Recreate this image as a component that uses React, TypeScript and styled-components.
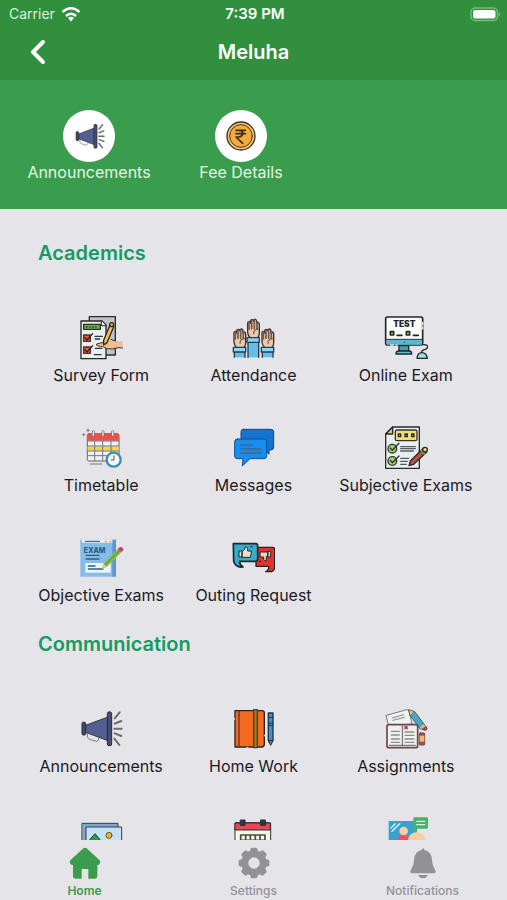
import React from "react";
import styled, { createGlobalStyle } from "styled-components";

const GlobalStyle = createGlobalStyle`
  *, *::before, *::after { box-sizing: border-box; }
  body {
    margin: 0;
    background: #e5e4e9;
    font-family: Inter, "Liberation Sans", sans-serif;
  }
  button { font: inherit; color: inherit; background: none; border: 0; padding: 0; cursor: pointer; }
`;

const Screen = styled.div`
  display: flex;
  flex-direction: column;
  height: 100vh;
  overflow: hidden;
  background: #e5e4e9;
`;

const TopBar = styled.header`
  background: #31903d;
  color: #fff;
`;

const StatusBar = styled.div`
  display: grid;
  grid-template-columns: 1fr auto 1fr;
  align-items: center;
  height: 28px;
  padding: 0 6px 0 9px;
  font-size: 14px;
  line-height: 20px;
`;

const Carrier = styled.span`
  display: flex;
  align-items: center;
  gap: 6px;
  color: #d9f2dc;
`;

const Clock = styled.span`
  font-size: 15px;
  font-weight: 600;
`;

const BatterySlot = styled.span`
  display: flex;
  justify-content: flex-end;
`;

const NavBar = styled.div`
  display: grid;
  grid-template-columns: 56px 1fr 56px;
  align-items: center;
  height: 52px;
  padding: 0 10px 4px;
`;

const BackButton = styled.button`
  display: flex;
  justify-content: center;
`;

const Title = styled.h1`
  margin: 0;
  text-align: center;
  font-size: 20px;
  line-height: 28px;
  font-weight: 600;
`;

const Hero = styled.section`
  display: grid;
  grid-template-columns: repeat(3, 1fr);
  padding: 30px 38px 27px 13px;
  background: #3a9c4d;
`;

const Shortcut = styled.button`
  display: flex;
  flex-direction: column;
  align-items: center;
  color: #e2f7e4;
  font-size: 16px;
  line-height: 20px;
  white-space: nowrap;
`;

const Disc = styled.span`
  display: flex;
  align-items: center;
  justify-content: center;
  width: 52px;
  height: 52px;
  border-radius: 50%;
  background: #fff;
`;

const Content = styled.main`
  flex: 1;
  min-height: 0;
  overflow-y: auto;
  scrollbar-width: none;
  padding: 14px 25px 0;
`;

const SectionTitle = styled.h2`
  margin: 0;
  padding-left: 13px;
  font-size: 20px;
  line-height: 61px;
  font-weight: 600;
  color: #149b61;
`;

const Grid = styled.div`
  display: grid;
  grid-template-columns: repeat(3, minmax(0, 1fr));
`;

const Tile = styled.button`
  display: flex;
  flex-direction: column;
  align-items: center;
  gap: 4px;
  height: 110px;
  padding-top: 32px;
  font-size: 16px;
  line-height: 22px;
  color: #1b1b1f;
  white-space: nowrap;
`;

const TabBar = styled.nav`
  display: grid;
  grid-template-columns: repeat(3, 1fr);
  height: 60px;
  background: #e5e4e9;
`;

const Tab = styled.a<{ $active?: boolean }>`
  display: flex;
  flex-direction: column;
  align-items: center;
  gap: 4px;
  padding-top: 7px;
  font-size: 12px;
  line-height: 16px;
  font-weight: ${(p) => (p.$active ? 600 : 500)};
  color: ${(p) => (p.$active ? "#3a9c4d" : "#929197")};
  text-decoration: none;
`;

type ArtProps = { box: string; size?: number; children: React.ReactNode };

const Art = ({ box, size = 44, children }: ArtProps) => (
  <svg width={size} height={size} viewBox={box} fill="none" strokeLinejoin="round" strokeLinecap="round" aria-hidden="true">
    {children}
  </svg>
);

const Megaphone = ({ size }: { size?: number }) => (
  <Art box="57 36 132 132" size={size}>
    <path d="M82 116v9q2 7 10 9l18 5q5 0 7-9" stroke="#77777d" strokeWidth="3" />
    <path d="M77 91 144 66V137L77 112Z" fill="#535f8f" stroke="#30334a" strokeWidth="3" />
    <rect x="66" y="82" width="11" height="38" rx="4" fill="#414868" stroke="#292a36" strokeWidth="3" />
    <rect x="142" y="51" width="13" height="101" rx="5" fill="#454d75" stroke="#292a36" strokeWidth="3" />
    <path d="m164 70 15-18M164 86l20-8M163 101h22M164 115l20 8M163 131l15 19" stroke="#6a6a70" strokeWidth="6" />
  </Art>
);

const Coin = () => (
  <Art box="532 64 90 90" size={30}>
    <circle cx="577" cy="109" r="42" fill="#f5c274" stroke="#3d332b" strokeWidth="4" />
    <circle cx="577" cy="109" r="34" fill="#f5ab3c" stroke="#4a3827" strokeWidth="3" />
    <path d="M562 92h28M562 102h28M562 92h9q11 0 11 9t-11 11h-9l20 19" stroke="#3a2c20" strokeWidth="5" />
  </Art>
);

const Survey = () => (
  <Art box="57 33 132 132">
    <path d="M88 35H166V150H88Z" fill="#bfc5c5" stroke="#292c2e" strokeWidth="4" />
    <path d="M63 48H126l12 12V161H63Z" fill="#e9efee" stroke="#242729" strokeWidth="4" />
    <path d="M124 48v14h14" fill="#fff" stroke="#242729" strokeWidth="3" />
    <rect x="71" y="58" width="50" height="15" fill="#79ad4b" stroke="#25351f" strokeWidth="4" />
    <path d="M79 66h34" stroke="#334b25" strokeWidth="4" strokeDasharray="3 6" />
    <path d="M71 90H91V109H71ZM71 126H91V145H71Z" fill="#e55d43" stroke="#5b2924" strokeWidth="4" />
    <path d="m75 98 6 7 17-19M75 134l6 7 17-19" stroke="#242628" strokeWidth="4" />
    <path d="M105 94h22M106 102h13M106 130h20M103 149h20" stroke="#293447" strokeWidth="4" />
    <path d="M188 109 166 108 146 98q-5 0-6 6l-12 7-18 5q-3 5 4 6l14 2 12 6 18 1 16-4h14Z" fill="#edbd93" />
    <path d="m188 129-14-1-16 4-18-1-12-6-14-2q-7-2-4-6l20-5M166 108l-13-5" stroke="#40342d" strokeWidth="3" />
    <path d="m149 62 12 3-20 48-10 7 0-14Z" fill="#f2c44d" stroke="#292825" strokeWidth="4" />
    <circle cx="155" cy="59" r="6" fill="#e4ae42" stroke="#292825" strokeWidth="4" />
  </Art>
);

const Hand = ({ x, y, foot }: { x: number; y: number; foot: number }) => (
  <g transform={`translate(${x} ${y})`}>
    <path d={`M4 58H36V${foot}H4Z`} fill="#66bdea" />
    <path d={`M4 ${foot}V58M36 58V${foot}`} stroke="#293e4a" strokeWidth="4" />
    <path d="M3 12q0-5 4-5t4 5V6q0-5 5-5t5 5V4q1-5 5-4t4 6v7q0-5 4-4t4 6v26q0 12-9 16H12Q3 49 3 39Z" fill="#edc8ad" stroke="#392f2b" strokeWidth="4" />
    <path d="M7 8v22M15 3v25M23 3v25M31 8v20" stroke="#735a4c" strokeWidth="5" />
    <path d="M34 29q-14 1-13 14" stroke="#493a33" strokeWidth="3" />
    <rect x="1" y="55" width="37" height="14" fill="#8bd4f3" stroke="#293e4a" strokeWidth="4" />
  </g>
);

const Hands = () => (
  <Art box="64 33 132 132">
    <Hand x={70} y={72} foot={85} />
    <Hand x={154} y={72} foot={85} />
    <Hand x={111} y={43} foot={114} />
  </Art>
);

const OnlineExam = () => (
  <Art box="72 33 132 132">
    <path d="M189 119q14-1 14 7 0 6-10 8-8 2-8 9" stroke="#202629" strokeWidth="4" />
    <path d="M117 122h29v17H117Z" fill="#4c9dad" stroke="#17272b" strokeWidth="4" />
    <path d="M108 147q0-9 8-9h32q7 0 7 9Z" fill="#68c0d5" stroke="#17272b" strokeWidth="4" />
    <rect x="77" y="36" width="111" height="84" rx="6" fill="#fbfcf8" stroke="#20282a" strokeWidth="5" />
    <path d="M80 104H186V119H80Z" fill="#53bbd6" />
    <path d="M78 103H187" stroke="#243236" strokeWidth="3" />
    <circle cx="133" cy="112" r="2" fill="#17272b" />
    <path d="M91 80h10v10H91ZM139 80h10v10h-10Z" fill="#b1cb74" stroke="#242a24" strokeWidth="5" />
    <path d="M111 91h15M160 91h15" stroke="#202629" strokeWidth="5" />
    <path d="M188 52v8M188 66v6M92 120h8M108 120h3" stroke="#e5e4e9" strokeWidth="4" />
    <path d="M171 160q2-17 15-17t16 17Z" fill="#a4dce9" stroke="#17272b" strokeWidth="4" />
    <text x="133" y="67" textAnchor="middle" fontFamily="Inter, sans-serif" fontSize="25" fontWeight="900" fill="#202629">TEST</text>
  </Art>
);

const Timetable = () => (
  <Art box="57 33 132 132">
    <rect x="82" y="56" width="95" height="82" rx="5" fill="#eef1f3" stroke="#66636b" strokeWidth="3" />
    <path d="M82 77V61q0-6 6-6h83q6 0 6 6v16Z" fill="#ee4f48" />
    <path d="M83 94h93v13H83Z" fill="#f1d544" />
    <path d="M83 78h93M83 93h93M83 108h93M83 122h93M104 78v59M128 78v59M153 78v59" stroke="#77767c" strokeWidth="3" />
    <path d="M100 50v11M129 50v11M158 50v11" stroke="#807680" strokeWidth="9" />
    <path d="M100 50v11M129 50v11M158 50v11" stroke="#e9e6ec" strokeWidth="4" />
    <path d="M84 42v8M80 46h8M71 56v6M68 59h6" stroke="#6c7c81" strokeWidth="3" />
    <path d="M91 147h34" stroke="#77767c" strokeWidth="3" />
    <circle cx="161" cy="134" r="21" fill="#f7f8fa" stroke="#3c8fae" strokeWidth="7" />
    <path d="M162 122v13h-8" stroke="#4e5966" strokeWidth="3" />
  </Art>
);

const Messages = () => (
  <Art box="64 33 132 132">
    <path d="M101 43h83q8 0 8 8v45q0 9-8 9h-6v13l-10-11h-67q-7 0-7-8V50q0-7 7-7Z" fill="#1473d3" stroke="#174a7c" strokeWidth="3" />
    <path d="M83 72h80q8 0 8 8v42q0 9-8 9h-42l-23 22 2-22H83q-8 0-8-8V80q0-8 8-8Z" fill="#168df0" stroke="#174f88" strokeWidth="3" />
    <path d="M95 91h32M95 103h58M95 114h58" stroke="#39678e" strokeWidth="6" />
    <path d="M96 91h30M96 103h56M96 114h56" stroke="#6d777e" strokeWidth="2" />
  </Art>
);

const SubjectiveExam = () => (
  <Art box="72 33 132 132">
    <path d="M98 36H178V160H77V57Z" fill="#e9eeee" stroke="#272b2e" strokeWidth="4" />
    <path d="M98 36V57H77Z" fill="#e5c356" stroke="#272b2e" strokeWidth="4" />
    <rect x="106" y="45" width="65" height="32" rx="5" fill="#f1dc80" stroke="#363329" strokeWidth="4" />
    <path d="M115 57h7v8h-7ZM135 57h7v8h-7ZM155 57h7v8h-7Z" fill="#a7bd5d" stroke="#262922" strokeWidth="4" />
    <circle cx="97" cy="101" r="13" fill="#a5cf67" stroke="#2c3b28" strokeWidth="4" />
    <circle cx="97" cy="138" r="13" fill="#a5cf67" stroke="#2c3b28" strokeWidth="4" />
    <path d="m91 99 6 7 20-21M91 136l6 7 20-20" stroke="#26302a" strokeWidth="4" />
    <path d="M122 95h44M122 101h44M122 108h38M122 130h24M122 139h20M122 148h17" stroke="#535a60" strokeWidth="4" />
    <path d="m190 100 10 11-39 37-14 4 4-14Z" fill="#b85443" stroke="#292929" strokeWidth="4" />
    <path d="m184 106 9 10" stroke="#78a863" strokeWidth="5" />
    <circle cx="195" cy="104" r="7" fill="#ecd480" stroke="#292929" strokeWidth="4" />
  </Art>
);

const ObjectiveExam = () => (
  <Art box="57 18 132 132">
    <path d="M61 29H168V140H61Z" fill="#85bdea" />
    <path d="M157 29h11v111h-11Z" fill="#5b96d0" />
    <path d="M66 29h91v9H66Z" fill="#eff3f4" />
    <path d="M76 34h43" stroke="#344759" strokeWidth="3" />
    <path d="M136 34h3M150 34h3" stroke="#ec8f61" strokeWidth="4" />
    <path d="M76 99h76v29H76Z" fill="#edf5fa" />
    <path d="M78 76h39M78 87h39M85 108h20M85 117h44" stroke="#2f5d82" strokeWidth="4" />
    <text x="104" y="68" textAnchor="middle" fontFamily="Inter, sans-serif" fontSize="21" fontWeight="800" fill="#315b7c">EXAM</text>
    <path d="m173 57 11 10-43 43-15 6 4-15Z" fill="#8abc49" />
    <path d="m178 62-44 44" stroke="#679d3c" strokeWidth="4" />
    <path d="m130 101 11 10-15 5Z" fill="#edc579" />
    <path d="m173 57 11 10 5-6q2-3-1-7-5-5-9-2Z" fill="#ca3e77" />
  </Art>
);

const Outing = () => (
  <Art box="514 18 132 132">
    <path d="M589 52h49q7 0 7 7v54q-1 9-9 12h-18q10-3 9-16h-38Z" fill="#df332d" stroke="#242326" strokeWidth="4" />
    <path d="M521 41h67q6 0 6 6v41q0 6-6 6h-48q-1 10 10 17-22 3-28-17Z" fill="#35aeca" stroke="#202528" strokeWidth="5" />
    <path d="M539 63h8v18h-8ZM548 64l8-7V51q6-2 8 3v9h11v6l-3 13h-24Z" fill="#e7e5cf" stroke="#25292b" strokeWidth="3" />
    <path d="M602 66h23v14h-5v12q-6 2-8-4v-7h-10ZM625 64h8v17h-8Z" fill="#e5d6c3" stroke="#392123" strokeWidth="3" />
    <path d="M600 94h3M574 50h3" stroke="#25292b" strokeWidth="4" />
  </Art>
);

const HomeWork = () => (
  <Art box="514 36 132 132">
    <path d="M526 47h82q6 0 6 7v93q0 9-8 9h-80Z" fill="#f56a21" stroke="#282323" strokeWidth="4" />
    <path d="M538 48v107" stroke="#6a3324" strokeWidth="4" />
    <path d="M582 44h11v114h-11Z" fill="#98812e" stroke="#454025" strokeWidth="4" />
    <path d="M626 54h14v82l-7 14-7-14Z" fill="#3495dd" stroke="#21323d" strokeWidth="4" />
    <path d="M626 67h14M626 84h14M626 91h14M626 136h14" stroke="#21323d" strokeWidth="3" />
    <path d="m629 142 4 8 4-8Z" fill="#ad5140" />
    <path d="M525 70v3M615 120v3M562 157h3" stroke="#e5e4e9" strokeWidth="3" />
  </Art>
);

const Assignments = () => (
  <Art box="162 36 132 132">
    <path d="m169 61 61-17q6-1 8 6l8 37-69 5Z" fill="#f0f1f1" stroke="#7b7b7e" strokeWidth="3" />
    <path d="m187 69 34-10M189 76l34-9" stroke="#838386" strokeWidth="3" />
    <path d="m237 45 17 5 31 41-13 12-31-40Z" fill="#4ba6c6" stroke="#44606c" strokeWidth="3" />
    <path d="m237 45 16 4-12 13Z" fill="#e9c48a" stroke="#44606c" strokeWidth="2" />
    <path d="m276 102 11-9q7 8 2 12-6 3-13-3Z" fill="#bf4050" stroke="#7c3640" strokeWidth="3" />
    <path d="m270 98 11-10 5 6-11 9Z" fill="#e4bf71" />
    <rect x="171" y="89" width="92" height="69" rx="5" fill="#f0f0ee" stroke="#64484e" strokeWidth="5" />
    <path d="M217 91v61M178 151h78" stroke="#675e62" strokeWidth="3" />
    <path d="M184 109h24M184 120h24M184 132h24M184 142h24M225 111h27M225 121h27M225 132h27M225 142h27" stroke="#8b8d90" strokeWidth="4" />
    <path d="M223 93h10v12l-5-4-5 4Z" fill="#b73e50" />
    <rect x="268" y="114" width="16" height="36" rx="3" fill="#ad4c4b" stroke="#71474a" strokeWidth="3" />
    <path d="M269 122h14v18h-14Z" fill="#edbf66" />
  </Art>
);

const Gallery = () => (
  <Art box="237 51 132 132">
    <path d="M247 70H354V155H247Z" fill="#83a7c6" stroke="#31424f" strokeWidth="3" />
    <path d="M259 81H365V167H259Z" fill="#c4e1f7" stroke="#31424f" strokeWidth="3" />
    <path d="m265 124 20-23 31 37h-51Z" fill="#2b9b4b" stroke="#24432e" strokeWidth="3" />
    <circle cx="327" cy="106" r="9" fill="#edb331" stroke="#695b32" strokeWidth="3" />
  </Art>
);

const EventCalendar = () => (
  <Art box="694 51 132 132">
    <rect x="706" y="68" width="107" height="98" rx="3" fill="#f8f7e7" stroke="#2c3036" strokeWidth="3" />
    <path d="M707 69H812V90H707Z" fill="#e54756" stroke="#352d34" strokeWidth="3" />
    <path d="M723 60h13v16h-13ZM784 60h13v16h-13Z" fill="#2c3b47" stroke="#202a33" strokeWidth="3" />
    <path d="M723 105h73v43h-73ZM723 121h73M738 105v43M752 105v43M767 105v43M781 105v43" stroke="#4b4b43" strokeWidth="5" />
  </Art>
);

const Meeting = () => (
  <Art box="1152 51 132 132">
    <path d="M1166 63H1251V145H1166Z" fill="#3aa2ca" />
    <path d="m1173 84 13-13M1176 94l23-23" stroke="#d9effa" strokeWidth="4" />
    <path d="M1192 135v-17q2-14 18-14t18 14v17Z" fill="#ef5060" />
    <circle cx="1211" cy="93" r="13" fill="#f5cfa3" />
    <circle cx="1250" cy="122" r="26" fill="#f5cfa3" />
    <path d="M1243 52h37q4 0 4 4v26q0 4-4 4h-27l-13 8V56q0-4 3-4Z" fill="#42b568" />
    <path d="M1250 64h24M1250 74h24" stroke="#e2f5e8" strokeWidth="4" />
  </Art>
);

const HomeIcon = () => (
  <Art box="207 141 96 96" size={32}>
    <path d="M250 145q5-3 10 0l39 36q3 4 1 9l-4 5h-4v34q0 7-7 7h-20v-29h-20v29h-19q-7 0-7-7v-34h-4l-5-5q-2-5 1-9Z" fill="currentColor" />
  </Art>
);

const GearIcon = () => (
  <Art box="0 0 96 96" size={32}>
    <g fill="currentColor">
      <path fillRule="evenodd" d="M48 10a38 38 0 1 0 0 76 38 38 0 0 0 0-76Zm0 21a17 17 0 1 1 0 34 17 17 0 0 1 0-34Z" />
      {[0, 45, 90, 135, 180, 225, 270, 315].map((angle) => (
        <path key={angle} d="M35 17 38 5q1-3 4-3h12q3 0 4 3l3 12Z" transform={`rotate(${angle} 48 48)`} />
      ))}
    </g>
  </Art>
);

const BellIcon = () => (
  <Art box="1218 141 96 96" size={32}>
    <path d="M1266 145q4 0 4 5 22 5 23 29 0 17 9 30 3 5 2 8-1 3-6 3h-64q-5 0-6-3-1-3 2-8 9-13 9-30 1-24 23-29 0-5 4-5ZM1252 225h28q-3 10-14 10t-14-10Z" fill="currentColor" />
  </Art>
);

const WifiIcon = () => (
  <svg width="20" height="16" viewBox="0 0 40 32" fill="none" stroke="#fff" strokeWidth="5" aria-hidden="true">
    <path d="M3 12Q20-3 37 12M10 20q10-9 20 0" />
    <path d="m14 24 6 7 6-7q-6-5-12 0Z" fill="#fff" stroke="none" />
  </svg>
);

const BatteryIcon = () => (
  <svg width="31" height="15" viewBox="0 0 62 30" fill="none" role="img" aria-label="Battery full">
    <rect x="2" y="2" width="53" height="25" rx="8" stroke="#77b980" strokeWidth="3" />
    <rect x="6" y="6" width="45" height="17" rx="4" fill="#fff" />
    <path d="M58 10q4 4 0 9Z" fill="#8bc493" />
  </svg>
);

const BackIcon = () => (
  <svg width="18" height="26" viewBox="0 0 18 26" fill="none" aria-hidden="true">
    <path d="M14 3 4 13l10 10" stroke="#fff" strokeWidth="4" strokeLinecap="round" strokeLinejoin="round" />
  </svg>
);

const sections = [
  {
    title: "Academics",
    items: [
      { label: "Survey Form", icon: <Survey /> },
      { label: "Attendance", icon: <Hands /> },
      { label: "Online Exam", icon: <OnlineExam /> },
      { label: "Timetable", icon: <Timetable /> },
      { label: "Messages", icon: <Messages /> },
      { label: "Subjective Exams", icon: <SubjectiveExam /> },
      { label: "Objective Exams", icon: <ObjectiveExam /> },
      { label: "Outing Request", icon: <Outing /> },
    ],
  },
  {
    title: "Communication",
    items: [
      { label: "Announcements", icon: <Megaphone /> },
      { label: "Home Work", icon: <HomeWork /> },
      { label: "Assignments", icon: <Assignments /> },
      { name: "Gallery", icon: <Gallery /> },
      { name: "Calendar", icon: <EventCalendar /> },
      { name: "Meetings", icon: <Meeting /> },
    ],
  },
] as { title: string; items: { label?: string; name?: string; icon: React.ReactNode }[] }[];

export default function App() {
  return (
    <Screen>
      <GlobalStyle />
      <TopBar>
        <StatusBar>
          <Carrier>Carrier <WifiIcon /></Carrier>
          <Clock>7:39 PM</Clock>
          <BatterySlot><BatteryIcon /></BatterySlot>
        </StatusBar>
        <NavBar>
          <BackButton type="button" aria-label="Back"><BackIcon /></BackButton>
          <Title>Meluha</Title>
        </NavBar>
      </TopBar>
      <Hero>
        <Shortcut type="button"><Disc><Megaphone size={31} /></Disc>Announcements</Shortcut>
        <Shortcut type="button"><Disc><Coin /></Disc>Fee Details</Shortcut>
      </Hero>
      <Content>
        {sections.map((section) => (
          <section key={section.title}>
            <SectionTitle>{section.title}</SectionTitle>
            <Grid>
              {section.items.map((item) => (
                <Tile type="button" key={item.label ?? item.name} aria-label={item.name}>
                  {item.icon}
                  {item.label}
                </Tile>
              ))}
            </Grid>
          </section>
        ))}
      </Content>
      <TabBar>
        <Tab href="#home" $active><HomeIcon />Home</Tab>
        <Tab href="#settings"><GearIcon />Settings</Tab>
        <Tab href="#notifications"><BellIcon />Notifications</Tab>
      </TabBar>
    </Screen>
  );
}
